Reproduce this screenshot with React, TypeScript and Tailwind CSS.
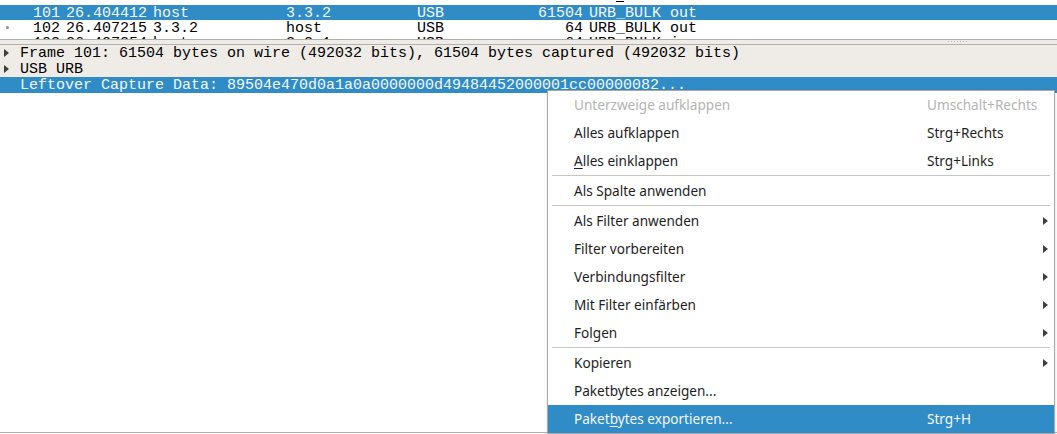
import React from "react"

const packets = [
  { no: "101", time: "26.404412", src: "host", dst: "3.3.2", proto: "USB", len: "61504", info: "URB_BULK out", mark: false, selected: true },
  { no: "102", time: "26.407215", src: "3.3.2", dst: "host", proto: "USB", len: "64", info: "URB_BULK out", mark: true },
  { no: "103", time: "26.407254", src: "host", dst: "3.3.1", proto: "USB", len: "64", info: "URB_BULK in", mark: false },
]

function Arrow({ color = "#3c3c3c" }: { color?: string }) {
  return (
    <svg width="5" height="8" viewBox="0 0 5 8">
      <path d="M0 0 L5 4 L0 8 Z" fill={color} />
    </svg>
  )
}

type Item = {
  label: React.ReactNode
  shortcut?: string
  sub?: boolean
  disabled?: boolean
  active?: boolean
}

const groups: Item[][] = [
  [
    { label: "Unterzweige aufklappen", shortcut: "Umschalt+Rechts", disabled: true },
    { label: "Alles aufklappen", shortcut: "Strg+Rechts" },
    { label: <><u className="underline-offset-2">A</u>lles einklappen</>, shortcut: "Strg+Links" },
  ],
  [{ label: "Als Spalte anwenden" }],
  [
    { label: "Als Filter anwenden", sub: true },
    { label: "Filter vorbereiten", sub: true },
    { label: "Verbindungsfilter", sub: true },
    { label: "Mit Filter einfärben", sub: true },
    { label: "Folgen", sub: true },
  ],
  [
    { label: "Kopieren", sub: true },
    { label: "Paketbytes anzeigen..." },
    { label: <>Paket<u className="underline-offset-2">b</u>ytes exportieren...</>, shortcut: "Strg+H", active: true },
  ],
]

function MenuRow({ item }: { item: Item }) {
  const tone = item.active
    ? "bg-[#308cc6] text-[#f4f8fb]"
    : item.disabled
      ? "text-[#b4b4b4]"
      : "text-[#1e1e1e]"
  return (
    <div className={`flex h-[28px] items-center pl-[26px] pr-[6px] ${tone}`}>
      <span className="w-[353px] shrink-0">{item.label}</span>
      <span className="flex-1">{item.shortcut}</span>
      {item.sub && <Arrow color="#404040" />}
    </div>
  )
}

export default function App() {
  return (
    <div className="relative h-[434px] w-[1057px] overflow-hidden bg-white">
      {/* Packet list (scrolled: only the underscore of the row above peeks in) */}
      <div className="h-[40px] overflow-hidden border-b border-[#b3afab] font-['Liberation_Mono',monospace] text-[15px] leading-[15px]">
        <div className="h-[4px] pl-[616px]">
          <div className="mt-[1px] h-[1px] w-[8px] bg-black" />
        </div>
        {packets.map((p) => (
          <div
            key={p.no}
            className={`flex h-[15px] items-center whitespace-pre ${p.selected ? "bg-[#308cc6] text-[#f4f8fb]" : "text-black"}`}
          >
            <span className="flex w-[20px] justify-center">
              {p.mark && <span className="ml-[-6px] h-[3px] w-[3px] rounded-full bg-[#8e8e8e]" />}
            </span>
            <span className="w-[40px] pt-[1px] text-right">{p.no}</span>
            <span className="w-[93px] pl-[6px] pt-[1px]">{p.time}</span>
            <span className="w-[133px] pt-[1px]">{p.src}</span>
            <span className="w-[131px] pt-[1px]">{p.dst}</span>
            <span className="w-[100px] pt-[1px]">{p.proto}</span>
            <span className="w-[66px] pt-[1px] text-right">{p.len}</span>
            <span className="pl-[6px] pt-[1px]">{p.info}</span>
          </div>
        ))}
      </div>

      {/* Splitter */}
      <div className="flex h-[4px] justify-end bg-[#efece8] pr-[90px]">
        <div className="mt-[1px] flex h-[1px] gap-[2px]">
          {Array.from({ length: 7 }).map((_, i) => (
            <span key={i} className="h-[1px] w-[1px] bg-[#bdb9b4]" />
          ))}
        </div>
      </div>

      {/* Packet details */}
      <div className="h-[389px] border-y border-[#b3afab] font-['Liberation_Mono',monospace] text-[15px] leading-[16px] whitespace-pre">
        <div className="flex h-[16px] items-center bg-[#efece8] text-black">
          <span className="flex w-[20px] pl-[4px]"><Arrow /></span>
          <span className="pt-[2px]">Frame 101: 61504 bytes on wire (492032 bits), 61504 bytes captured (492032 bits)</span>
        </div>
        <div className="flex h-[16px] items-center bg-[#efece8] text-black">
          <span className="flex w-[20px] pl-[4px]"><Arrow /></span>
          <span className="pt-[2px]">USB URB</span>
        </div>
        <div className="flex h-[16px] items-center bg-[#308cc6] text-[#f4f8fb]">
          <span className="w-[20px]" />
          <span className="pt-[2px]">Leftover Capture Data: 89504e470d0a1a0a0000000d49484452000001cc00000082...</span>
        </div>
      </div>

      {/* Context menu */}
      <div className="absolute left-[547px] top-[90px] w-[508px] border border-[#a9a9a9] bg-white font-['Noto_Sans',sans-serif] text-[13.6px] shadow-[0_1px_3px_rgba(0,0,0,0.15)]">
        {groups.map((g, gi) => (
          <div key={gi}>
            {gi > 0 && (
              <div className="h-[2px]">
                <div className="mx-[4px] h-[1px] bg-[#c6c6c6]" />
              </div>
            )}
            {g.map((item, ii) => (
              <MenuRow key={ii} item={item} />
            ))}
          </div>
        ))}
      </div>
    </div>
  )
}
